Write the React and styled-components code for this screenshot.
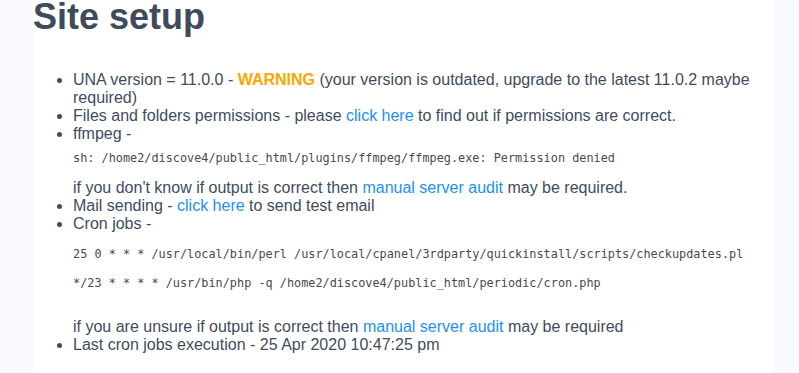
import styled, { createGlobalStyle } from "styled-components";

const GlobalStyle = createGlobalStyle`
  html, body {
    margin: 0;
    padding: 0;
    background: #f8fafd;
    font-family: "Liberation Sans", Arial, sans-serif;
  }
`;

export default function App() {
  return (
    <SPage>
      <GlobalStyle />
      <SPanel>
        <STitle>Site setup</STitle>
        <SList>
          <li>
            UNA version = 11.0.0 - <SWarning>WARNING</SWarning> (your version is outdated,
            upgrade to the latest 11.0.2 maybe required)
          </li>
          <li>
            Files and folders permissions - please <SLink href="#">click here</SLink> to find
            out if permissions are correct.
          </li>
          <li>
            ffmpeg -
            <SPre $top={8} $bottom={13}>
              sh: /home2/discove4/public_html/plugins/ffmpeg/ffmpeg.exe: Permission denied
            </SPre>
            if you don't know if output is correct then{" "}
            <SLink href="#">manual server audit</SLink> may be required.
          </li>
          <li>
            Mail sending - <SLink href="#">click here</SLink> to send test email
          </li>
          <li>
            Cron jobs -
            <SPre $top={14.5} $bottom={13}>
              {"25 0 * * * /usr/local/bin/perl /usr/local/cpanel/3rdparty/quickinstall/scripts/checkupdates.pl\n\n*/23 * * * * /usr/bin/php -q /home2/discove4/public_html/periodic/cron.php\n\n"}
            </SPre>
            if you are unsure if output is correct then{" "}
            <SLink href="#">manual server audit</SLink> may be required
          </li>
          <li>Last cron jobs execution - 25 Apr 2020 10:47:25 pm</li>
        </SList>
      </SPanel>
    </SPage>
  );
}

// =========================== STYLES ============================= //

const SPage = styled.div`
  display: grid;
  grid-template-columns: 33px 741px 1fr;
  min-height: 100vh;
`;

const SPanel = styled.div`
  grid-column: 2;
  background: #ffffff;
  color: #3e4c5d;
  min-height: 100vh;
  overflow: hidden;
`;

const STitle = styled.h1`
  margin: -4px 0 0;
  font-size: 36px;
  font-weight: 700;
  line-height: 41px;
  color: #3d4b5c;
`;

const SList = styled.ul`
  margin: 34px 0 0;
  padding-left: 40px;
  font-size: 16px;
  line-height: 18px;
`;

const SWarning = styled.span`
  color: #ffa500;
  font-weight: 700;
`;

const SLink = styled.a`
  color: #1e8ff0;
  text-decoration: none;
`;

const SPre = styled.pre`
  margin: ${(p) => p.$top}px 0 ${(p) => p.$bottom}px;
  font-family: "DejaVu Sans Mono", monospace;
  font-size: 11.85px;
  line-height: 14.5px;
  color: #4a4a4a;
`;
